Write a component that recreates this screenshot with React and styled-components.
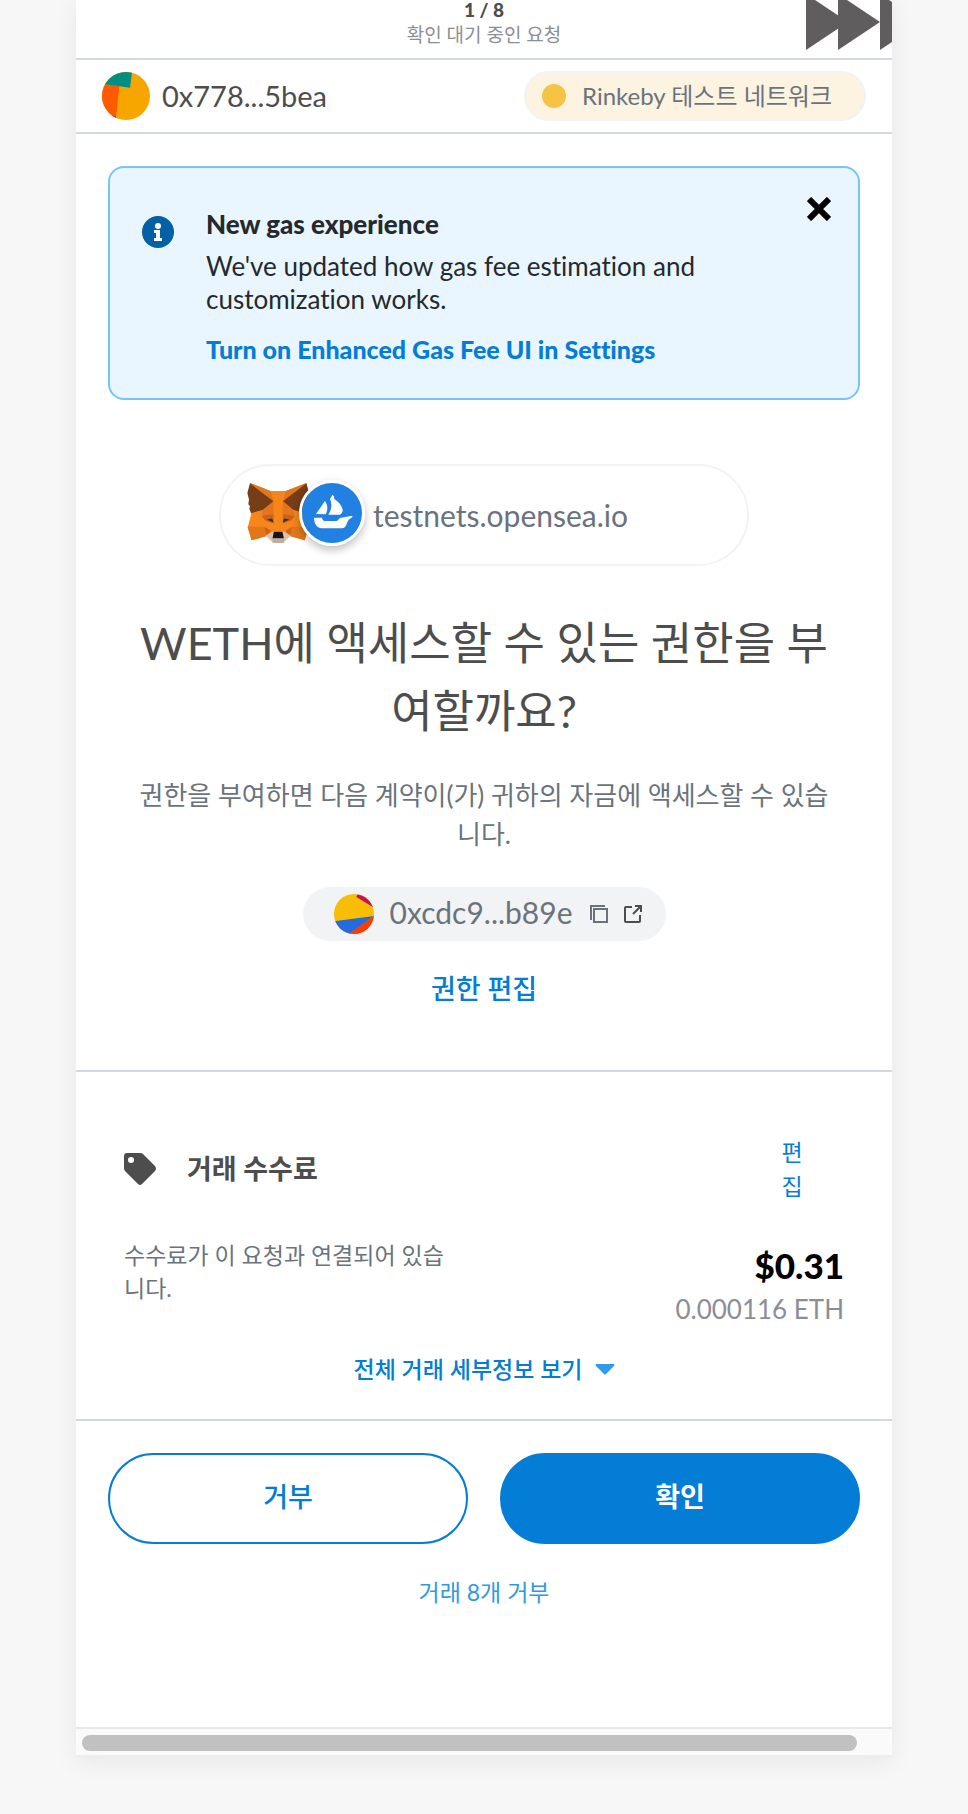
import styled, { createGlobalStyle } from "styled-components";

const GlobalStyle = createGlobalStyle`
  * {
    box-sizing: border-box;
  }

  body {
    margin: 0;
    background-color: #f7f7f7;
    font-family: Lato, "Noto Sans CJK KR", sans-serif;
    font-variant-ligatures: none;
    color: #4d4d4d;
  }

  h1, h2, h3, p {
    margin: 0;
  }

  button {
    font-family: inherit;
    cursor: pointer;
  }
`;

const Page = styled.div`
  min-height: 100vh;
  padding: 0 76px 57px;
`;

const Popup = styled.main`
  overflow: hidden;
  background-color: #fff;
  box-shadow: 0 4px 24px rgba(0, 0, 0, 0.07);
`;

const QueueBar = styled.header`
  display: grid;
  grid-template-columns: 1fr auto 1fr;
  align-items: start;
  border-bottom: 2px solid #d2d8dd;
`;

const QueueText = styled.div`
  grid-column: 2;
  padding-bottom: 10px;
  text-align: center;
`;

const QueueCount = styled.strong`
  display: block;
  font-size: 19px;
  font-weight: 900;
  line-height: 20px;
`;

const QueueLabel = styled.span`
  display: block;
  margin-top: 2px;
  font-size: 19px;
  line-height: 26px;
  color: #8b8e94;
`;

const PlainButton = styled.button`
  display: flex;
  padding: 0;
  border: none;
  background: none;
`;

const SkipButton = styled(PlainButton)`
  justify-self: end;
`;

const AccountBar = styled.div`
  display: flex;
  align-items: center;
  justify-content: space-between;
  padding: 11px 26px;
  border-bottom: 2px solid #d2d8dd;
`;

const Account = styled.div`
  display: flex;
  align-items: center;
  gap: 12px;
  font-size: 29px;
  line-height: 50px;
`;

const Network = styled.div`
  display: flex;
  align-items: center;
  gap: 16px;
  height: 50px;
  padding: 0 32px 0 16px;
  border: 2px solid #f2f3f4;
  border-radius: 25px;
  background-color: #fdf3e1;
  font-size: 24px;
  line-height: 44px;
  color: #6a737d;
`;

const NetworkDot = styled.span`
  width: 24px;
  height: 24px;
  border-radius: 50%;
  background-color: #f6c343;
`;

const Alert = styled.section`
  display: grid;
  grid-template-columns: 32px 1fr 24px;
  gap: 32px;
  margin: 32px 32px 0;
  padding: 40px 27px 32px 32px;
  border: 2px solid #75c4fd;
  border-radius: 16px;
  background-color: #eaf6ff;
  font-size: 26px;
  line-height: 33px;
  color: #24292e;
`;

const AlertIcon = styled.svg`
  margin-top: 8px;
`;

const AlertTitle = styled.h3`
  font-size: 26px;
  font-weight: 900;
`;

const AlertText = styled.p`
  margin: 9px 0 17px;
`;

const AlertLink = styled.a`
  display: block;
  font-size: 25px;
  font-weight: 900;
  color: #037dd6;
  text-decoration: none;
`;

const CloseButton = styled(PlainButton)`
  align-self: start;
  margin-top: -11px;
`;

const Request = styled.section`
  display: flex;
  flex-direction: column;
  align-items: center;
  padding: 64px 56px 61px;
  border-bottom: 2px solid #d2d8dd;
  text-align: center;
`;

const Origin = styled.div`
  display: flex;
  align-items: center;
  gap: 8px;
  width: 530px;
  max-width: 100%;
  height: 102px;
  padding: 0 26px;
  border: 2px solid #f2f3f4;
  border-radius: 51px;
  font-size: 30px;
  line-height: 40px;
  color: #6a737d;
`;

const OriginLogos = styled.div`
  display: flex;
  align-items: center;
  padding-bottom: 4px;
`;

const SiteBadge = styled.span`
  display: flex;
  margin-left: -11px;
  border: 3px solid #fff;
  border-radius: 50%;
  box-shadow: 0 4px 8px rgba(0, 0, 0, 0.25);
`;

const Title = styled.h1`
  margin-top: 43px;
  font-size: 45px;
  font-weight: 400;
  line-height: 68px;
`;

const Description = styled.p`
  margin-top: 31px;
  font-size: 26px;
  line-height: 39px;
  color: #6a737d;
`;

const Contract = styled.div`
  display: flex;
  align-items: center;
  height: 54px;
  margin-top: 33px;
  padding: 0 23px 0 31px;
  border-radius: 27px;
  background-color: #f2f3f4;
  font-size: 30px;
  line-height: 50px;
  color: #6a737d;
`;

const ContractAddress = styled.span`
  margin: 0 16px;
  padding-bottom: 4px;
`;

const ExternalLink = styled.a`
  display: flex;
  margin-left: 14px;
`;

const EditPermission = styled(PlainButton)`
  margin-top: 28px;
  font-size: 27px;
  font-weight: 500;
  line-height: 40px;
  color: #037dd6;
`;

const Fees = styled.section`
  padding: 63px 48px 33px;
  border-bottom: 2px solid #d2d8dd;
`;

const FeeHeader = styled.div`
  display: flex;
  align-items: center;
  gap: 31px;
  padding-right: 41px;
`;

const FeeTitle = styled.h2`
  flex: 1;
  font-size: 27px;
  font-weight: 700;
  line-height: 34px;
`;

const EditFee = styled.button`
  width: 22px;
  padding: 0;
  border: none;
  background: none;
  font-size: 23px;
  line-height: 34px;
  color: #037dd6;
`;

const FeeBody = styled.div`
  display: flex;
  justify-content: space-between;
  margin-top: 36px;
`;

const FeeNote = styled.p`
  width: 46%;
  font-size: 23px;
  line-height: 33px;
  color: #6a737d;
`;

const FeeAmount = styled.div`
  padding-top: 4px;
  text-align: right;
  line-height: 44px;
`;

const Fiat = styled.div`
  font-size: 35px;
  font-weight: 900;
  color: #000;
`;

const Eth = styled.div`
  font-size: 26px;
  color: #8b8e94;
`;

const DetailsButton = styled(PlainButton)`
  align-items: center;
  gap: 12px;
  margin: 21px auto 0;
  font-size: 23px;
  font-weight: 500;
  line-height: 34px;
  color: #037dd6;
`;

const Footer = styled.footer`
  display: flex;
  flex-direction: column;
  align-items: center;
  padding: 32px 32px 118px;
`;

const Actions = styled.div`
  display: grid;
  grid-template-columns: 1fr 1fr;
  gap: 32px;
  width: 100%;
`;

const ActionButton = styled.button`
  padding: 22px 16px 25px;
  border: 2px solid #037dd6;
  border-radius: 46px;
  background-color: ${(props) => (props.$primary ? "#037dd6" : "#fff")};
  color: ${(props) => (props.$primary ? "#fff" : "#037dd6")};
  font-size: 27px;
  font-weight: ${(props) => (props.$primary ? 700 : 500)};
  line-height: 40px;
`;

const RejectAll = styled(PlainButton)`
  margin-top: 31px;
  font-size: 23px;
  line-height: 34px;
  color: #2f9ae0;
`;

const ScrollTrack = styled.div`
  padding: 6px 35px 4px 6px;
  border-top: 2px solid #e8e8e8;
  border-bottom: 2px solid #ededed;
  background-color: #fafafa;
`;

const ScrollThumb = styled.div`
  height: 16px;
  border-radius: 8px;
  background-color: #c1c1c1;
`;

function SkipIcon() {
  return (
    <svg width="86" height="50" viewBox="0 6 86 50" fill="#5f5d5e">
      <path d="M0 0l42 28L0 56zM32 0l42 28-42 28zM74 0l42 28-42 28z" />
    </svg>
  );
}

function AccountAvatar() {
  return (
    <svg width="48" height="48" viewBox="0 0 144 144">
      <clipPath id="account">
        <circle cx="72" cy="72" r="72" />
      </clipPath>
      <g clipPath="url(#account)">
        <path fill="#f7a600" d="M0 0h144v144H0z" />
        <path fill="#ff5a00" d="M0 34l52 8-10 94-6 8H0z" />
        <path fill="#f2058b" d="M33 130l9 4v10H30z" />
        <path fill="#028e80" d="M0 0h90l-6 47L0 35z" />
      </g>
    </svg>
  );
}

function ContractAvatar() {
  return (
    <svg width="40" height="40" viewBox="0 0 120 120">
      <clipPath id="contract">
        <circle cx="60" cy="60" r="60" />
      </clipPath>
      <g clipPath="url(#contract)">
        <path fill="#f8be05" d="M0 0h120v120H0z" />
        <path fill="#c8144c" d="M71 0l-4 9 53 32V0z" />
        <path fill="#246be0" d="M0 82l120-16-74 54H0z" />
        <path fill="#fc3c00" d="M120 66v54H44z" />
      </g>
    </svg>
  );
}

function FoxIcon() {
  return (
    <svg width="63" height="60" viewBox="2 0 188 181">
      <path fill="#f6851b" d="M10 0l62 24h46L180 0l8 32-10 58 9 45-12 38-45-13-15 12H75l-15-12-45 13-12-38 11-43z" />
      <path fill="#e2761b" d="M10 0l62 24 9 31zM180 0l-62 24-9 31zM3 132h50l7 28-45 13zM187 132h-50l-7 28 45 13z" />
      <path fill="#763d16" d="M10 1l71 54-31 26-37 10-5-13 2-8-5-6 2-14-5-20zM180 1l-71 54 31 26 37 10 5-13-2-8 5-6-2-14 5-20z" />
      <path fill="#e4751f" d="M50 81l31-26 4 44-39-2zM140 81l-31-26-4 44 39-2z" />
      <path fill="#cd6116" d="M45 99l37-5 4 30-30-11zM145 99l-37-5-4 30 30-11zM53 132l20 12-13 16zM137 132l-20 12 13 16z" />
      <path fill="#f6851b" d="M81 55h28v93H81z" />
      <path fill="#233447" d="M61 110l16-3 4 12zM129 110l-16-3-4 12z" />
      <path fill="#d7c1b3" d="M57 158l22-12h32l22 12-22 22H79z" />
      <path fill="#c0ad9e" d="M76 168h38l-3 13H79z" />
      <path fill="#161616" d="M82 147h26l4 20H78z" />
    </svg>
  );
}

function OpenSeaIcon() {
  return (
    <svg width="60" height="60" viewBox="0 0 180 180">
      <circle cx="90" cy="90" r="90" fill="#2081e2" />
      <path
        fill="#fff"
        d="M69 54c9 13 9 27 2 40l-29-1zM84 47l4-6 3-6 5 5 1 8c14 9 24 22 25 33 1 6-4 12-8 14H79c10-15 12-32 5-48z"
      />
      <path
        fill="#fff"
        d="M36 104h24c2 8 5 10 11 10h30c7 0 9-8 16-10l34-6v5c-11 5-13 11-17 20-3 8-7 13-15 13H62c-14 0-26-10-26-32z"
      />
    </svg>
  );
}

function App() {
  return (
    <Page>
      <GlobalStyle />
      <Popup>
        <QueueBar>
          <QueueText>
            <QueueCount>1 / 8</QueueCount>
            <QueueLabel>확인 대기 중인 요청</QueueLabel>
          </QueueText>
          <SkipButton aria-label="다음 요청">
            <SkipIcon />
          </SkipButton>
        </QueueBar>

        <AccountBar>
          <Account>
            <AccountAvatar />
            0x778...5bea
          </Account>
          <Network>
            <NetworkDot />
            Rinkeby 테스트 네트워크
          </Network>
        </AccountBar>

        <Alert>
          <AlertIcon width="32" height="32" viewBox="0 0 32 32">
            <circle cx="16" cy="16" r="16" fill="#0260a4" />
            <circle cx="16" cy="10" r="3" fill="#fff" />
            <path fill="#fff" d="M12 14h6v8h2v3h-8v-3h2v-5h-2z" />
          </AlertIcon>
          <div>
            <AlertTitle>New gas experience</AlertTitle>
            <AlertText>
              We've updated how gas fee estimation and customization works.
            </AlertText>
            <AlertLink href="#settings">
              Turn on Enhanced Gas Fee UI in Settings
            </AlertLink>
          </div>
          <CloseButton aria-label="닫기">
            <svg width="24" height="24" viewBox="0 0 24 24">
              <path d="M2 2l20 20M22 2L2 22" stroke="#000" strokeWidth="6" />
            </svg>
          </CloseButton>
        </Alert>

        <Request>
          <Origin>
            <OriginLogos>
              <FoxIcon />
              <SiteBadge>
                <OpenSeaIcon />
              </SiteBadge>
            </OriginLogos>
            testnets.opensea.io
          </Origin>
          <Title>WETH에 액세스할 수 있는 권한을 부여할까요?</Title>
          <Description>
            권한을 부여하면 다음 계약이(가) 귀하의 자금에 액세스할 수 있습니다.
          </Description>
          <Contract>
            <ContractAvatar />
            <ContractAddress>0xcdc9...b89e</ContractAddress>
            <PlainButton aria-label="복사">
              <svg width="20" height="20" viewBox="0 0 20 20" fill="none" stroke="#6a737d" strokeWidth="2">
                <path d="M2 16V2h14" />
                <path d="M5 5h13v13H5z" />
              </svg>
            </PlainButton>
            <ExternalLink href="#explorer" aria-label="탐색기에서 보기">
              <svg width="20" height="20" viewBox="0 0 20 20" fill="none" stroke="#4d4d4d" strokeWidth="2">
                <path d="M9 3H3q-1 0-1 1v13q0 1 1 1h13q1 0 1-1v-6" />
                <path d="M12 2h6v6M18 2l-8 8" />
              </svg>
            </ExternalLink>
          </Contract>
          <EditPermission>권한 편집</EditPermission>
        </Request>

        <Fees>
          <FeeHeader>
            <svg width="32" height="32" viewBox="0 0 32 32">
              <path
                fill="#4d4d4d"
                fillRule="evenodd"
                d="M3 0h13q2 0 3 1l12 12q2 3 0 5L18 31q-2 2-4 0L1 18q-1-1-1-3V3q0-3 3-3zM7 4a3 3 0 1 0 0 6 3 3 0 0 0 0-6z"
              />
            </svg>
            <FeeTitle>거래 수수료</FeeTitle>
            <EditFee>편집</EditFee>
          </FeeHeader>
          <FeeBody>
            <FeeNote>수수료가 이 요청과 연결되어 있습니다.</FeeNote>
            <FeeAmount>
              <Fiat>$0.31</Fiat>
              <Eth>0.000116 ETH</Eth>
            </FeeAmount>
          </FeeBody>
          <DetailsButton>
            전체 거래 세부정보 보기
            <svg width="20" height="12" viewBox="0 0 20 12">
              <path fill="#2f9af0" d="M1 1h18q1 1 0 2l-8 8q-1 1-2 0L1 3q-1-1 0-2z" />
            </svg>
          </DetailsButton>
        </Fees>

        <Footer>
          <Actions>
            <ActionButton>거부</ActionButton>
            <ActionButton $primary>확인</ActionButton>
          </Actions>
          <RejectAll>거래 8개 거부</RejectAll>
        </Footer>

        <ScrollTrack>
          <ScrollThumb />
        </ScrollTrack>
      </Popup>
    </Page>
  );
}

export default App;
